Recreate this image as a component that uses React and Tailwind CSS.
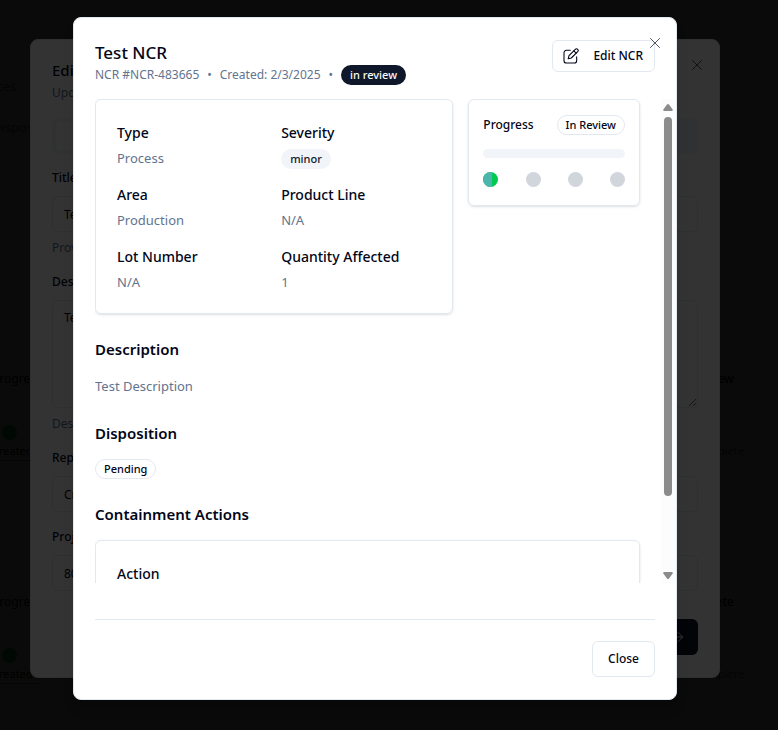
import { ArrowRight, X } from "lucide-react";

function Badge({ variant, children }) {
  const styles = {
    dark: "border-transparent bg-slate-900 font-medium text-slate-50",
    soft: "border-transparent bg-slate-100 font-medium text-slate-900",
    outline: "border-slate-200 font-medium text-slate-950",
  };
  return (
    <span
      className={`inline-flex h-5 items-center rounded-full border px-2 pb-px text-[11px] leading-none whitespace-nowrap ${styles[variant]}`}
    >
      {children}
    </span>
  );
}

function PencilSquare() {
  return (
    <svg viewBox="0 0 24 24" className="size-4" fill="none" stroke="currentColor" strokeWidth="1.6" strokeLinecap="round" strokeLinejoin="round" aria-hidden="true">
      <path d="M11 3.500H5A3.500 3.500 0 0 0 1.500 7v12A3.500 3.500 0 0 0 5 22.500H17a3.500 3.500 0 0 0 3.500-3.500V13" />
      <path d="M18.400 2a2.500 2.500 0 0 1 3.600 3.600L12.500 15l-4.700 1.200 1.200-4.700z" />
      <path d="M16.200 4.200l3.600 3.600" />
    </svg>
  );
}

function Field({ label, children }) {
  return (
    <div>
      <dt className="text-[14px] leading-[22px] font-medium">{label}</dt>
      <dd className="mt-1 flex h-[22px] items-center text-[13px] text-slate-500">{children}</dd>
    </div>
  );
}

function Section({ title, children }) {
  return (
    <section className="mt-[22px]">
      <h3 className="mb-3 text-[15px] leading-[27px] font-semibold">{title}</h3>
      {children}
    </section>
  );
}

function PageStep({ status }) {
  return (
    <div className="flex justify-between">
      <div className="-ml-2 text-[12px]">
        <p className="h-[55px]">Progress</p>
        <div className="ml-[10px] size-[15px] rounded-full bg-green-500" />
        <p className="mt-0.5 border-b border-dotted border-black text-[11px] leading-[18px]">Created</p>
      </div>
      <div className="text-right text-[12px]">
        <p className="mr-[10px] h-[72px] font-medium">{status}</p>
        <p className="text-[11px] leading-[18px] text-slate-500">Complete</p>
      </div>
    </div>
  );
}

function Page() {
  return (
    <main className="absolute inset-0 overflow-hidden bg-white">
      <div className="-ml-2 pt-[76px] text-[13px] leading-[21px]">
        <p className="w-6 text-right text-slate-500">ces</p>
        <p className="mt-5 text-slate-500">Disposition</p>
      </div>
      <div className="mt-[22px] h-[210px] border-t border-slate-200" />
      <div className="flex flex-col gap-[132px] pr-[34px]">
        <PageStep status="In Review" />
        <PageStep status="Complete" />
      </div>
    </main>
  );
}

function FormField({ id, label, value, help, multiline }) {
  const box = "block w-full rounded-md border border-slate-200 bg-transparent px-[11px] text-[12px]";
  return (
    <div>
      <label htmlFor={id} className="block text-[12px] leading-[18px] font-medium">{label}</label>
      {multiline ? (
        <textarea id={id} defaultValue={value} className={`${box} mt-[9px] h-[108px] resize-y py-[7px] leading-5`} />
      ) : (
        <input id={id} defaultValue={value} className={`${box} mt-[9px] h-9`} />
      )}
      {help && <p className="mt-[7px] text-[12px] leading-[18px] text-slate-500">{help}</p>}
    </div>
  );
}

function EditDialog() {
  return (
    <div className="absolute inset-0 flex items-center justify-center bg-black/80 pr-[28px] pb-[13px]">
      <form className="relative w-full max-w-[690px] rounded-lg border border-slate-200 bg-white px-[21px] pt-[18px] pb-[22px] text-slate-950">
        <button type="button" aria-label="Close form" className="absolute top-4 right-[13px] opacity-70">
          <X className="size-[18px]" strokeWidth={1.3} />
        </button>
        <h2 className="text-[15px] leading-6 font-medium">Edit NCR</h2>
        <p className="mt-0.5 text-[12px] leading-[18px] text-slate-500">Update</p>
        <div className="mt-4 h-9 rounded-md bg-slate-100 p-1">
          <div className="h-full w-1/2 rounded bg-white" />
        </div>
        <div className="mt-[15px] flex flex-col gap-4">
          <FormField id="title" label="Title" value="Test NCR" help="Provide" />
          <FormField id="description" label="Description" value="Test Description" help="Description" multiline />
          <FormField id="reported" label="Reported" value="Created" />
          <FormField id="project" label="Project" value="80" />
        </div>
        <div className="mt-[28px] flex justify-end">
          <button type="button" aria-label="Next" className="flex h-9 w-20 items-center justify-end rounded-md bg-slate-900 pr-3 text-slate-50">
            <ArrowRight className="size-4" strokeWidth={1.5} />
          </button>
        </div>
      </form>
    </div>
  );
}

function ScrollBar() {
  return (
    <div className="flex w-[15px] shrink-0 flex-col items-center bg-[#fcfcfc] pt-[5px] pr-px pb-1 text-[#8b8b8b]" aria-hidden="true">
      <svg viewBox="0 0 10 7" className="h-[7px] w-[10px]" fill="currentColor">
        <path d="M4 .6Q5-.4 6 .6L9.700 5.500Q10 7 8.800 7H1.200Q0 7 .3 5.500Z" />
      </svg>
      <div className="mt-[6px] w-2 grow-[5] basis-0 rounded-full bg-[#8b8b8b]" />
      <div className="grow basis-0" />
      <svg viewBox="0 0 10 7" className="h-[7px] w-[10px]" fill="currentColor">
        <path d="M4 6.400Q5 7.400 6 6.400L9.700 1.500Q10 0 8.800 0H1.200Q0 0 .3 1.500Z" />
      </svg>
    </div>
  );
}

function ProgressCard() {
  return (
    <aside className="self-start rounded-md border border-slate-200 px-[14px] pt-[15px] pb-[18px] shadow-sm">
      <div className="flex items-center justify-between">
        <span className="text-[12px] font-medium">Progress</span>
        <Badge variant="outline">In Review</Badge>
      </div>
      <div className="mt-[14px] h-[9px] rounded-full bg-slate-100" />
      <div className="mt-[14px] flex justify-between">
        <span className="flex size-[15px] overflow-hidden rounded-full bg-green-500">
          <span className="w-[9px] bg-[#4db6ac]" />
        </span>
        <span className="size-[15px] rounded-full bg-gray-300" />
        <span className="size-[15px] rounded-full bg-gray-300" />
        <span className="size-[15px] rounded-full bg-gray-300" />
      </div>
    </aside>
  );
}

function NcrDialog() {
  return (
    <div className="absolute inset-0 flex items-center justify-center bg-black/80 pr-[28px] pb-[13px]">
      <div role="dialog" aria-labelledby="ncr-title" className="relative w-full max-w-[604px] rounded-lg border border-slate-200 bg-white py-[22px] pl-[21px] text-slate-950 shadow-lg">
        <header className="flex items-start justify-between pr-[21px]">
          <div>
            <h2 id="ncr-title" className="text-[17px] leading-[25px] font-medium">Test NCR</h2>
            <div className="flex items-center gap-2 text-[12px] leading-5 text-slate-500">
              <span>NCR #NCR-483665</span>
              <span>•</span>
              <span>Created: 2/3/2025</span>
              <span>•</span>
              <Badge variant="dark">in review</Badge>
            </div>
          </div>
          <button type="button" className="flex h-8 items-center gap-[14px] rounded-md border border-slate-200 pr-[11px] pl-[10px] text-[12px] font-medium">
            <PencilSquare />
            Edit NCR
          </button>
        </header>
        <button type="button" aria-label="Dismiss" className="absolute top-4 right-3 opacity-70">
          <X className="size-[18px]" strokeWidth={1.3} />
        </button>

        <div className="mt-[14px] flex h-[484px]">
          <div className="min-w-0 flex-1 overflow-hidden pr-[21px]">
            <div className="grid grid-cols-3 gap-[15px]">
              <dl className="col-span-2 grid grid-cols-2 gap-[14px] rounded-md border border-slate-200 px-[21px] pt-[22px] pb-[19px] shadow-sm">
                <Field label="Type">Process</Field>
                <Field label="Severity"><Badge variant="soft">minor</Badge></Field>
                <Field label="Area">Production</Field>
                <Field label="Product Line">N/A</Field>
                <Field label="Lot Number">N/A</Field>
                <Field label="Quantity Affected">1</Field>
              </dl>
              <ProgressCard />
            </div>
            <Section title="Description">
              <p className="text-[13px] leading-[23px] text-slate-500">Test Description</p>
            </Section>
            <Section title="Disposition">
              <div className="flex"><Badge variant="outline">Pending</Badge></div>
            </Section>
            <Section title="Containment Actions">
              <div className="rounded-md border border-slate-200 px-[21px] py-[22px] shadow-sm">
                <h4 className="text-[14px] leading-[22px] font-medium">Action</h4>
              </div>
            </Section>
          </div>
          <ScrollBar />
        </div>

        <footer className="mt-9 mr-[21px] flex justify-end border-t border-slate-200 pt-[21px]">
          <button type="button" className="h-9 rounded-md border border-slate-200 px-[15px] text-[12px] font-medium">Close</button>
        </footer>
      </div>
    </div>
  );
}

export default function App() {
  return (
    <div className="relative min-h-screen overflow-hidden font-['Noto_Sans','Open_Sans',sans-serif]">
      <Page />
      <EditDialog />
      <NcrDialog />
    </div>
  );
}
